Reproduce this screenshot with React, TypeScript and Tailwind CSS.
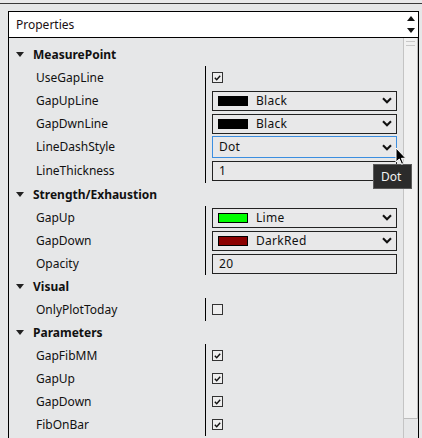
import React from "react";

type Prop = {
  label: string;
  kind: "check" | "color" | "select" | "text";
  checked?: boolean;
  color?: string;
  text?: string;
  focused?: boolean;
  h?: number;
};

type Group = { name: string; props: Prop[] };

const GROUPS: Group[] = [
  {
    name: "MeasurePoint",
    props: [
      { label: "UseGapLine", kind: "check", checked: true },
      { label: "GapUpLine", kind: "color", color: "#000000", text: "Black" },
      { label: "GapDwnLine", kind: "color", color: "#000000", text: "Black" },
      { label: "LineDashStyle", kind: "select", text: "Dot", focused: true, h: 24 },
      { label: "LineThickness", kind: "text", text: "1", h: 24 },
    ],
  },
  {
    name: "Strength/Exhaustion",
    props: [
      { label: "GapUp", kind: "color", color: "#00ff00", text: "Lime" },
      { label: "GapDown", kind: "color", color: "#8b0000", text: "DarkRed" },
      { label: "Opacity", kind: "text", text: "20" },
    ],
  },
  {
    name: "Visual",
    props: [{ label: "OnlyPlotToday", kind: "check", checked: false }],
  },
  {
    name: "Parameters",
    props: [
      { label: "GapFibMM", kind: "check", checked: true },
      { label: "GapUp", kind: "check", checked: true },
      { label: "GapDown", kind: "check", checked: true },
      { label: "FibOnBar", kind: "check", checked: true },
    ],
  },
];

const Chevron = () => (
  <svg width="10" height="7" viewBox="0 0 10 7" className="shrink-0">
    <path d="M1 1.2 L5 5.2 L9 1.2" fill="none" stroke="#111" strokeWidth="2.1" />
  </svg>
);

const Check = ({ checked }: { checked?: boolean }) => (
  <div className="flex h-[11px] w-[11px] items-center justify-center border border-[#333] bg-[#eeeeee]">
    {checked && (
      <svg width="7" height="6" viewBox="0 0 7 6">
        <path d="M0.8 2.8 L2.7 4.8 L6.2 0.8" fill="none" stroke="#111" strokeWidth="1.4" />
      </svg>
    )}
  </div>
);

const Editor = ({ p }: { p: Prop }) => {
  if (p.kind === "check") return <Check checked={p.checked} />;
  const box = p.focused
    ? "h-[22px] border border-[#3b8ee0]"
    : "h-[20px] border border-[#222]";
  return (
    <div className={`flex w-[185px] items-center bg-[#e8e8e9] ${box} ${p.kind === "color" ? "pl-[5px]" : "pl-[6px]"} pr-[4px]`}>
      {p.kind === "color" && (
        <span className="mr-[8px] h-[10px] w-[30px] shrink-0 border border-black" style={{ backgroundColor: p.color }} />
      )}
      <span className="flex-1 leading-none tracking-[0.3px] text-[#111]">{p.text}</span>
      {(p.kind === "color" || p.kind === "select") && <Chevron />}
    </div>
  );
};

const Triangle = () => (
  <svg width="8" height="5" viewBox="0 0 8 5" className="ml-[7px] mr-[9px]">
    <path d="M0 0 L8 0 L4 5 Z" fill="#222" />
  </svg>
);

export default function App() {
  return (
    <div
      className="relative h-[438px] w-[422px] overflow-hidden bg-[#e6e7e8] text-[12px] text-[#111]"
      style={{ fontFamily: '"Segoe UI", "Noto Sans", sans-serif' }}
    >
      <div className="h-[3px] bg-[#e9e9ea]" />
      <div className="h-px bg-[#3a3a3a]" />
      <div className="h-[7px]" />

      <div className="ml-[8px] w-[411px] border-x border-black">
        {/* header */}
        <div className="flex h-[27px] items-center border-y border-black bg-white pl-[7px] pr-[3px]">
          <span className="flex-1 text-[#1a0f14]">Properties</span>
          <div className="flex flex-col items-center gap-[7px]">
            <svg width="8" height="5" viewBox="0 0 8 5">
              <path d="M0 5 L4 0 L8 5 Z" fill="#111" />
            </svg>
            <svg width="8" height="5" viewBox="0 0 8 5">
              <path d="M0 0 L8 0 L4 5 Z" fill="#111" />
            </svg>
          </div>
        </div>

        <div className="flex">
          <div className="w-[394px] pt-[5px]">
            {GROUPS.map((g) => (
              <div key={g.name}>
                <div className="flex h-[23px] items-center font-bold">
                  <Triangle />
                  <span>{g.name}</span>
                </div>
                {g.props.map((p, i) => (
                  <div
                    key={i}
                    className={`flex items-center ${p.h === 24 ? "h-[24px]" : "h-[23px]"}`}
                  >
                    <div className="w-[196px] pl-[27px]">{p.label}</div>
                    <div className="flex h-full items-center border-l border-black pl-[6px]">
                      <Editor p={p} />
                    </div>
                  </div>
                ))}
              </div>
            ))}
          </div>

          {/* scrollbar */}
          <div className="h-[400px] w-[15px] border-l border-[#c4c4c4]">
            <div className="flex h-[381px] flex-col items-center gap-[3px] border-b border-r border-[#bdbdbd] bg-[#f1f1f1] pt-[3px]">
              <div className="h-px w-[9px] bg-[#c8c8c8]" />
              <div className="h-px w-[9px] bg-[#c8c8c8]" />
            </div>
          </div>
        </div>
      </div>

      {/* tooltip */}
      <div className="absolute left-[373px] top-[164px] flex h-[25px] w-[39px] items-center border border-[#5a5a5a] bg-[#2b2b2b] pl-[7px] text-[#f2f2f2]">
        Dot
      </div>

      {/* cursor */}
      <svg className="absolute left-[395px] top-[147px]" width="12" height="19" viewBox="0 0 12 19">
        <path
          d="M1 1 L1 15 L4.3 12 L6.6 17.3 L8.6 16.4 L6.4 11.3 L10.8 11.3 Z"
          fill="#000"
          stroke="#fff"
          strokeWidth="1"
          strokeLinejoin="round"
        />
      </svg>
    </div>
  );
}
